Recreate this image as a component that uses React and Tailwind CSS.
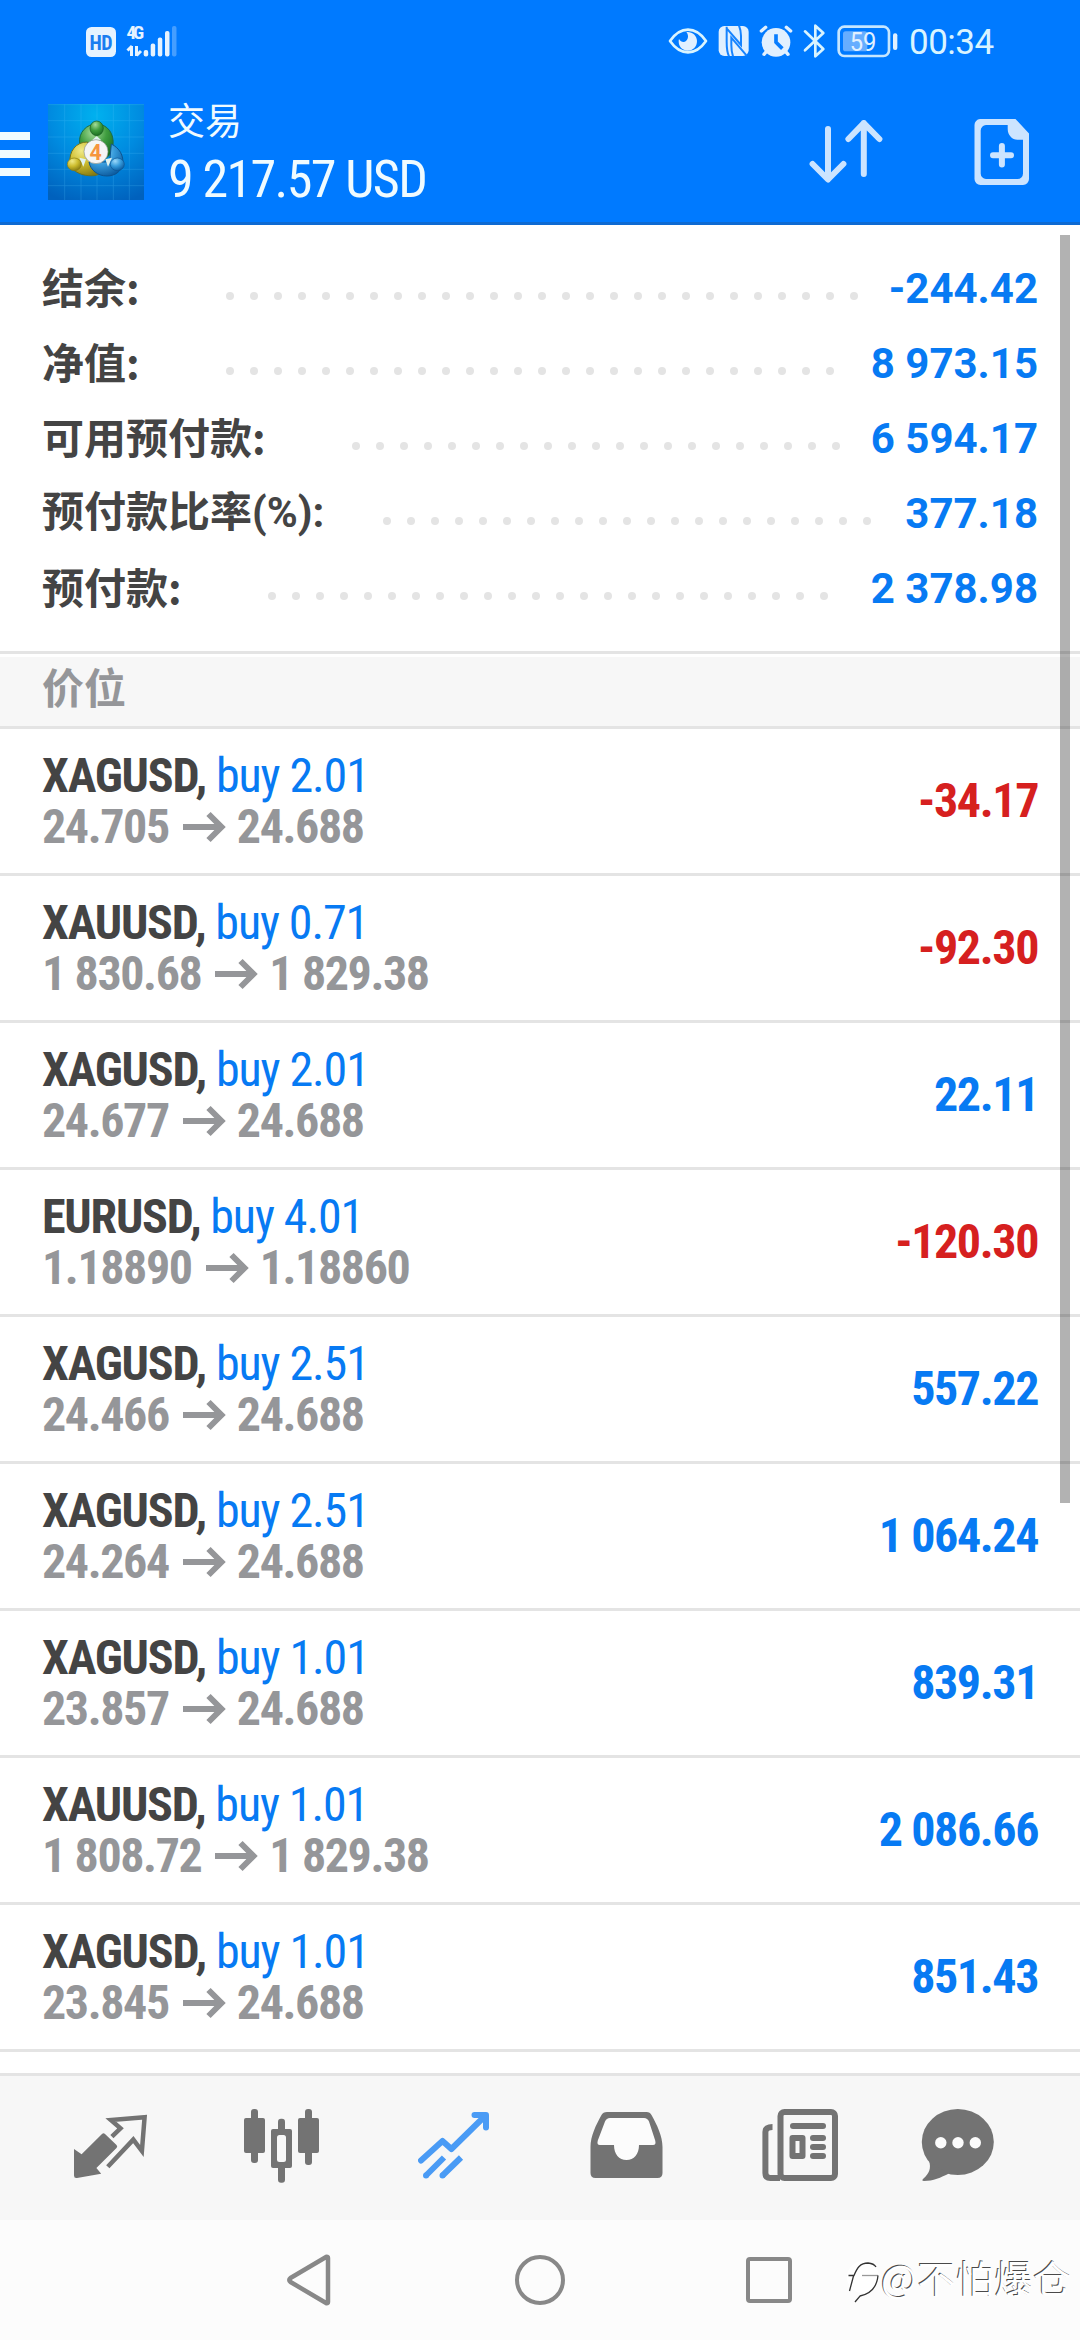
const summary = [
  { label: "结余:", value: "-244.42", dots: 27, labelWidth: "w-[184px]" },
  { label: "净值:", value: "8 973.15", dots: 26, labelWidth: "w-[184px]" },
  { label: "可用预付款:", value: "6 594.17", dots: 21, labelWidth: "w-[310px]" },
  { label: "预付款比率", suffix: "(%):", value: "377.18", dots: 21, labelWidth: "w-[341px]" },
  { label: "预付款:", value: "2 378.98", dots: 24, labelWidth: "w-[226px]" },
]

const positions = [
  { symbol: "XAGUSD", volume: "2.01", open: "24.705", current: "24.688", profit: "-34.17" },
  { symbol: "XAUUSD", volume: "0.71", open: "1 830.68", current: "1 829.38", profit: "-92.30" },
  { symbol: "XAGUSD", volume: "2.01", open: "24.677", current: "24.688", profit: "22.11" },
  { symbol: "EURUSD", volume: "4.01", open: "1.18890", current: "1.18860", profit: "-120.30" },
  { symbol: "XAGUSD", volume: "2.51", open: "24.466", current: "24.688", profit: "557.22" },
  { symbol: "XAGUSD", volume: "2.51", open: "24.264", current: "24.688", profit: "1 064.24" },
  { symbol: "XAGUSD", volume: "1.01", open: "23.857", current: "24.688", profit: "839.31" },
  { symbol: "XAUUSD", volume: "1.01", open: "1 808.72", current: "1 829.38", profit: "2 086.66" },
  { symbol: "XAGUSD", volume: "1.01", open: "23.845", current: "24.688", profit: "851.43" },
]

const SignalIcons = () => (
  <svg className="h-[40px] w-[100px]" viewBox="80 20 100 40" fill="#e6f3ff">
    <rect x="86" y="26" width="30" height="30" rx="5.5" />
    <text x="101" y="48.5" textAnchor="middle" fontSize="20" className="font-['Roboto_Condensed'] font-bold" fill="#1a7df0" textLength="23">HD</text>
    <text x="126.5" y="38" fontSize="19" className="font-['Roboto_Condensed'] font-bold" textLength="17.5">4G</text>
    <path d="M131.500 45v10M127.500 49.500l4.500-4.500" stroke="#e6f3ff" strokeWidth="3" fill="none" />
    <path d="M136.500 45v10M136.500 54.500l4.500-4.500" stroke="#e6f3ff" strokeWidth="3" fill="none" />
    <rect x="143.700" y="49" width="4.500" height="6.500" rx="2" />
    <rect x="150.700" y="42.500" width="4.500" height="13" rx="2" />
    <rect x="157.800" y="36.500" width="4.500" height="19" rx="2" />
    <rect x="165" y="30" width="4.500" height="25.500" rx="2" />
    <rect x="172" y="25" width="4.500" height="30.500" rx="2" opacity="0.3" />
  </svg>
)

const StatusIcons = () => (
  <svg className="h-[60px] w-[240px]" viewBox="0 0 720 180" fill="#e1f0ff">
    {/* eye comfort */}
    <path d="M30 90C48 64 66 56 84 56s36 8 54 34c-18 26-36 34-54 34S48 116 30 90z" fill="none" stroke="#d9f4ff" strokeWidth="8" strokeLinejoin="round" />
    <path d="M79 63c17-2 32 10 32 27s-12 29-28 29-27-12-27-28c0-2 0-5 1-7 5 9 15 11 21 6 8-7 8-19 1-27z" />
    {/* nfc */}
    <rect x="176" y="45" width="90" height="90" rx="17" />
    <path d="M200 47v45c0 20 1 32 7 44M200 52l43 50V74c0-12-2-20-6-30M219 136c-4-12-5-22-5-34V80l46 54" fill="none" stroke="#1683ff" strokeWidth="6" />
    {/* alarm */}
    <circle cx="348" cy="94" r="43" />
    <path d="M304 60l13-11M379 49l13 11M312 130l10-12M384 130l-10-12" stroke="#e1f0ff" strokeWidth="10" strokeLinecap="round" />
    <path d="M348 70v24l19 19" fill="none" stroke="#087dff" strokeWidth="11" />
    {/* bluetooth */}
    <path d="M435 61l55 53-24 22V44l24 22-55 52" fill="none" stroke="#d9f4ff" strokeWidth="8" strokeLinejoin="round" strokeLinecap="round" />
    {/* battery */}
    <rect x="536" y="47" width="151" height="88" rx="17" fill="none" stroke="#c6e6ff" strokeWidth="8" />
    <rect x="549" y="61" width="73" height="60" rx="8" fill="#66adff" />
    <rect x="699" y="67" width="13" height="50" rx="6" />
    <text x="609" y="119" textAnchor="middle" fontSize="78" textLength="80" lengthAdjust="spacingAndGlyphs" className="font-['Roboto']">59</text>
  </svg>
)

const Logo = () => (
  <svg className="ml-[18px] size-[96px]" viewBox="0 0 288 288">
    <defs>
      <radialGradient id="sky" cx="0.5" cy="0.12" r="0.95">
        <stop offset="0" stopColor="#00b1ef" />
        <stop offset="0.5" stopColor="#008be0" />
        <stop offset="1" stopColor="#0061bd" />
      </radialGradient>
      <radialGradient id="green" cx="0.4" cy="0.25" r="0.8">
        <stop offset="0" stopColor="#a5dc9a" />
        <stop offset="0.5" stopColor="#3f9d3f" />
        <stop offset="1" stopColor="#17691f" />
      </radialGradient>
      <radialGradient id="yellow" cx="0.35" cy="0.25" r="0.8">
        <stop offset="0" stopColor="#f0ea88" />
        <stop offset="0.5" stopColor="#cdbd2e" />
        <stop offset="1" stopColor="#857a12" />
      </radialGradient>
      <radialGradient id="blue" cx="0.35" cy="0.25" r="0.8">
        <stop offset="0" stopColor="#9bd8fa" />
        <stop offset="0.5" stopColor="#369bdb" />
        <stop offset="1" stopColor="#0c5a9e" />
      </radialGradient>
    </defs>
    <rect width="288" height="288" fill="url(#sky)" />
    <path d="M0 2h288M0 50h288M0 99h288M0 148h288M0 196h288M0 245h288M50 0v288M99 0v288M147 0v288M196 0v288M244 0v288" stroke="#5ccaff" strokeWidth="2" opacity="0.3" />
    <path d="M95 118c-4-32 20-58 51-58s54 28 49 65c-3 20-12 34-24 38l-30-60-28 40z" fill="url(#green)" stroke="#1b6b4a" strokeWidth="3" />
    <path d="M66 178c-4-36 18-64 52-64l14 28-4 40 36 20c-8 10-24 15-42 13-28-2-50-15-56-37z" fill="url(#yellow)" stroke="#6d721f" strokeWidth="3" />
    <path d="M190 120c24 12 38 34 34 62-6 22-24 34-47 34-28 0-50-18-54-42l62 0z" fill="url(#blue)" stroke="#0d5490" strokeWidth="3" />
    <path d="M146 96l-14 13h28zM94 161l20 5-8 22zM192 161l-20 5 8 22z" fill="#dff2ee" />
    <ellipse cx="146" cy="73" rx="20" ry="22" fill="url(#green)" stroke="#15591f" strokeWidth="2" />
    <ellipse cx="79" cy="181" rx="21" ry="19" fill="url(#yellow)" stroke="#8a7b10" strokeWidth="2" />
    <ellipse cx="208" cy="181" rx="21" ry="19" fill="url(#blue)" stroke="#0c5494" strokeWidth="2" />
    <circle cx="144" cy="143" r="36" fill="#f5f5f5" stroke="#8a938a" strokeWidth="2" />
    <text x="143" y="167" textAnchor="middle" fontSize="64" fill="#f6953f" className="font-['Roboto'] font-bold">4</text>
  </svg>
)

const SortIcon = () => (
  <svg className="h-[66px] w-[76px]" viewBox="0 0 76 66" fill="none" stroke="#cce4ff" strokeWidth="6" strokeLinecap="round" strokeLinejoin="round">
    <path d="M20 10v50M4.600 45L20 60.500 35.400 45M55.800 55V4M40.400 20L55.800 4.200 71.400 20" />
  </svg>
)

const NewOrderIcon = () => (
  <svg className="ml-[90px] h-[68px] w-[56px]" viewBox="0 0 56 68" fill="#cce4ff">
    <path fillRule="evenodd" d="M6 1h35.500L55 15.500V61a6 6 0 0 1-6 6H6.500a6 6 0 0 1-6-6V7a6 6 0 0 1 5.500-6zM12 7a5.500 5.500 0 0 0-5.300 5.500v43A5.500 5.500 0 0 0 12 61h31.500a5.500 5.500 0 0 0 5.500-5.500V21.800h-5.500c-5.500 0-9.800-5-9.800-10.800V7z" />
    <path d="M27.900 28v18.500M19 37.200h18" stroke="#cce4ff" strokeWidth="6" strokeLinecap="round" />
  </svg>
)

const Header = () => (
  <header className="flex h-[225px] flex-col border-b-[3px] border-[#0e6ad2] bg-[#007aff] text-[#f0fbff]">
    <div className="flex h-[82px] items-center pl-[80px]">
      <SignalIcons />
      <div className="ml-[480px] flex items-center">
        <StatusIcons />
        <span className="ml-[9px] pt-[4px] font-['Roboto'] text-[35px] leading-none tracking-[-0.5px] text-[#d9f4ff]">00:34</span>
      </div>
    </div>
    <div className="flex h-[142px] items-center">
      <div className="mt-[4px] flex w-[30px] flex-col gap-[10px]">
        <div className="h-[8px] bg-[#f0fbff]" />
        <div className="h-[8px] bg-[#f0fbff]" />
        <div className="h-[8px] bg-[#f0fbff]" />
      </div>
      <Logo />
      <div className="ml-[24px] w-[640px] pt-[7px]">
        <div className="font-['Noto_Sans_CJK_SC',sans-serif] text-[37px] leading-[50px]">交易</div>
        <div className="font-['Roboto_Condensed'] text-[52px] leading-[72px] tracking-[-1.6px]">9 217.57 USD</div>
      </div>
      <SortIcon />
      <NewOrderIcon />
    </div>
  </header>
)

const SummaryRow = ({ label, suffix, value, dots, labelWidth }) => (
  <div className="flex h-[75px] items-center">
    <div className={`${labelWidth} shrink-0 whitespace-nowrap pb-[3px] font-['Noto_Sans_CJK_SC',sans-serif] text-[42px] leading-[60px] font-bold text-[#444444]`}>
      {label}
      {suffix && <span className="font-['Roboto']">{suffix}</span>}
    </div>
    <div className="mt-[17px] flex gap-[16px]">
      {Array.from({ length: dots }, (_, i) => (
        <span key={i} className="size-[8px] rounded-full bg-[#e4e4e4]" />
      ))}
    </div>
    <div className="ml-auto pt-[2px] font-['Roboto'] text-[42px] font-bold text-[#077af3]">{value}</div>
  </div>
)

const PriceArrow = () => (
  <svg className="mr-[11px] ml-[14px] h-[32px] w-[43px]" viewBox="0 0 43 32" fill="none" stroke="#959699" strokeWidth="6">
    <path d="M0 16h38M25.500 3L38.500 16 25.500 29" />
  </svg>
)

const PositionRow = ({ symbol, volume, open, current, profit }) => (
  <div className="flex h-[147px] items-center justify-between border-b-[3px] border-[#e4e4e4] px-[42px] font-['Roboto_Condensed'] text-[48px] font-bold tracking-[-1.4px]">
    <div className="leading-[51px]">
      <div className="tracking-[-1.2px] text-[#444444]">
        {symbol}, <span className="font-normal tracking-[-1.1px] text-[#077af3]">buy {volume}</span>
      </div>
      <div className="flex items-center text-[#959699]">
        <span>{open}</span>
        <PriceArrow />
        <span>{current}</span>
      </div>
    </div>
    <div className={profit.startsWith("-") ? "text-[#d6201f]" : "text-[#077af3]"}>{profit}</div>
  </div>
)

const TabBar = () => (
  <nav className="flex h-[147px] items-center border-t-[3px] border-[#e4e4e4] bg-[#f7f7f7] pl-[74px] text-[#737373]">
    <svg className="h-[78px] w-[74px]" viewBox="0 -5 74 78">
      <path d="M0 35l7.600 5.200L28 20q1.500-1.500 3 0L42.500 31q1.500 1.500 0 3L22.400 54l4.800 5.700L3 64q-3 .5-3-2.500z" fill="currentColor" />
      <path d="M37.900 22.700l8.600-8.400-9.600-8.300L70.600 3.200 67.900 37l-8.600-11.400L33.800 52.700" fill="none" stroke="currentColor" strokeWidth="4.500" />
    </svg>
    <svg className="ml-[96px] h-[78px] w-[75px]" viewBox="0 0 75 78" fill="currentColor">
      <rect x="0" y="9" width="21" height="35" rx="2" />
      <rect x="7" y="0" width="7" height="54" rx="3" />
      <rect x="54" y="9" width="21" height="35" rx="2" />
      <rect x="61" y="0" width="7" height="56" rx="3" />
      <rect x="34" y="9.700" width="7" height="64" rx="3" />
      <rect x="27" y="20" width="21" height="39" rx="2" />
      <rect x="33" y="26" width="9" height="27" rx="2.500" fill="#f7f7f7" />
    </svg>
    <svg className="ml-[99px] h-[78px] w-[72px]" viewBox="0 -3 72 78" fill="none" stroke="#4a9bf5" strokeWidth="6" strokeLinejoin="round">
      <path d="M3 48.500L24.500 29l8.900 8L67 4M56.500 3h11.500v12.500" strokeLinecap="round" />
      <path d="M8 63.500L26 45.500M24.500 63.500L43 45.500" />
      <path d="M8 63.500h.01M24.500 63.500h.01" strokeLinecap="round" />
    </svg>
    <svg className="ml-[100px] h-[78px] w-[73px]" viewBox="0 -3 73 78" fill="currentColor">
      <path d="M17 0h39.500q3.500 0 5 3C67 13 72.500 24 72.500 35v26q0 5-5 5h-62q-5 0-5-5V35C.5 24 6 13 11.500 3q1.500-3 5.500-3z" />
      <path d="M20 6h34q3.500 0 5 3.500l6.200 19q1.200 4.500-2.200 4.500H49c0 9-5 15-12.500 15S24 42 24 33H10q-3.500 0-2.200-4.500L15 9.500Q16.500 6 20 6z" fill="#fcfcfc" />
    </svg>
    <svg className="ml-[99px] h-[78px] w-[76px]" viewBox="0 0 76 78" fill="currentColor">
      <rect x="18.500" y="3" width="54.500" height="66" rx="4" fill="none" stroke="currentColor" strokeWidth="6" />
      <path d="M10.500 18Q3.400 18 3.400 23v41q0 5 5 5H18" fill="none" stroke="currentColor" strokeWidth="6" />
      <rect x="28" y="14" width="36" height="6" rx="3" />
      <rect x="30.500" y="29" width="10" height="18" fill="none" stroke="currentColor" strokeWidth="6" strokeLinejoin="round" />
      <rect x="48" y="26" width="16" height="6" rx="3" />
      <rect x="48" y="35" width="16" height="6" rx="3" />
      <rect x="48" y="44" width="16" height="6" rx="3" />
    </svg>
    <svg className="ml-[83px] h-[78px] w-[73px]" viewBox="0 0 73 78" fill="currentColor">
      <ellipse cx="36.800" cy="33" rx="36" ry="33" />
      <path d="M8 52c2.500 7 0 13-5.500 17.500Q0 72 3 72c9 0 17-3.500 25-7.500z" />
      <g fill="#fcfcfc">
        <circle cx="19.800" cy="33.700" r="5.700" />
        <circle cx="37" cy="33.700" r="5.700" />
        <circle cx="54.300" cy="33.700" r="5.700" />
      </g>
    </svg>
  </nav>
)

const SystemNav = () => (
  <div className="flex h-[120px] items-center bg-[#fcfcfc] pl-[286px]">
    <svg className="h-[52px] w-[45px]" viewBox="0 0 45 52" fill="none" stroke="#888888" strokeWidth="4.500" strokeLinejoin="round">
      <path d="M40.500 2.800q1.500 0 1.500 1.500v43.500q0 1.500-1.500 1.500L4.500 28q-2.500-2 0-4z" />
    </svg>
    <div className="ml-[184px] size-[50px] rounded-full border-[4.500px] border-[#888888]" />
    <div className="ml-[181px] size-[46px] rounded-[4px] border-[4.500px] border-[#888888]" />
    <svg className="ml-[54px] h-[46px] w-[34px]" viewBox="0 0 34 46" fill="none">
      <circle cx="17" cy="20" r="16" fill="#ffffff" />
      <path d="M3.500 34l4-15M2.500 18.500h5.500C11 11 14 6 22 6q6 .5 8 4" stroke="#333333" strokeWidth="1.300" />
      <path d="M16 18.500h16" stroke="#999999" strokeWidth="1.300" />
      <path d="M32 18.500c-1 11-6 18-18 20.500L9 45" stroke="#333333" strokeWidth="1.300" />
    </svg>
    <span className="ml-[1px] whitespace-nowrap pb-[7px] font-['Noto_Sans_CJK_SC',sans-serif] text-[38px] leading-[56px] tracking-[0.6px] text-white [text-shadow:-1px_-1px_0_#4a4a4a]">@不怕爆仓</span>
  </div>
)

export default function App() {
  return (
    <div className="relative flex h-[2340px] w-[1080px] flex-col overflow-hidden bg-white">
      <Header />
      <main className="h-[1848px]">
        <section className="h-[429px] border-b-[3px] border-[#e4e4e4] px-[42px] pt-[25px]">
          {summary.map((row) => (
            <SummaryRow key={row.label} {...row} />
          ))}
        </section>
        <div className="mt-[3px] flex h-[72px] items-center border-b-[3px] border-[#e4e4e4] bg-[#f7f7f7] px-[42px]">
          <h2 className="pb-[12px] font-['Noto_Sans_CJK_SC',sans-serif] text-[42px] font-bold leading-none text-[#959699]">价位</h2>
        </div>
        {positions.map((position, i) => (
          <PositionRow key={i} {...position} />
        ))}
      </main>
      <TabBar />
      <SystemNav />
      {/* Scroll indicator */}
      <div className="absolute right-[10px] top-[235px] h-[1268px] w-[10px] bg-black/30" />
    </div>
  )
}
